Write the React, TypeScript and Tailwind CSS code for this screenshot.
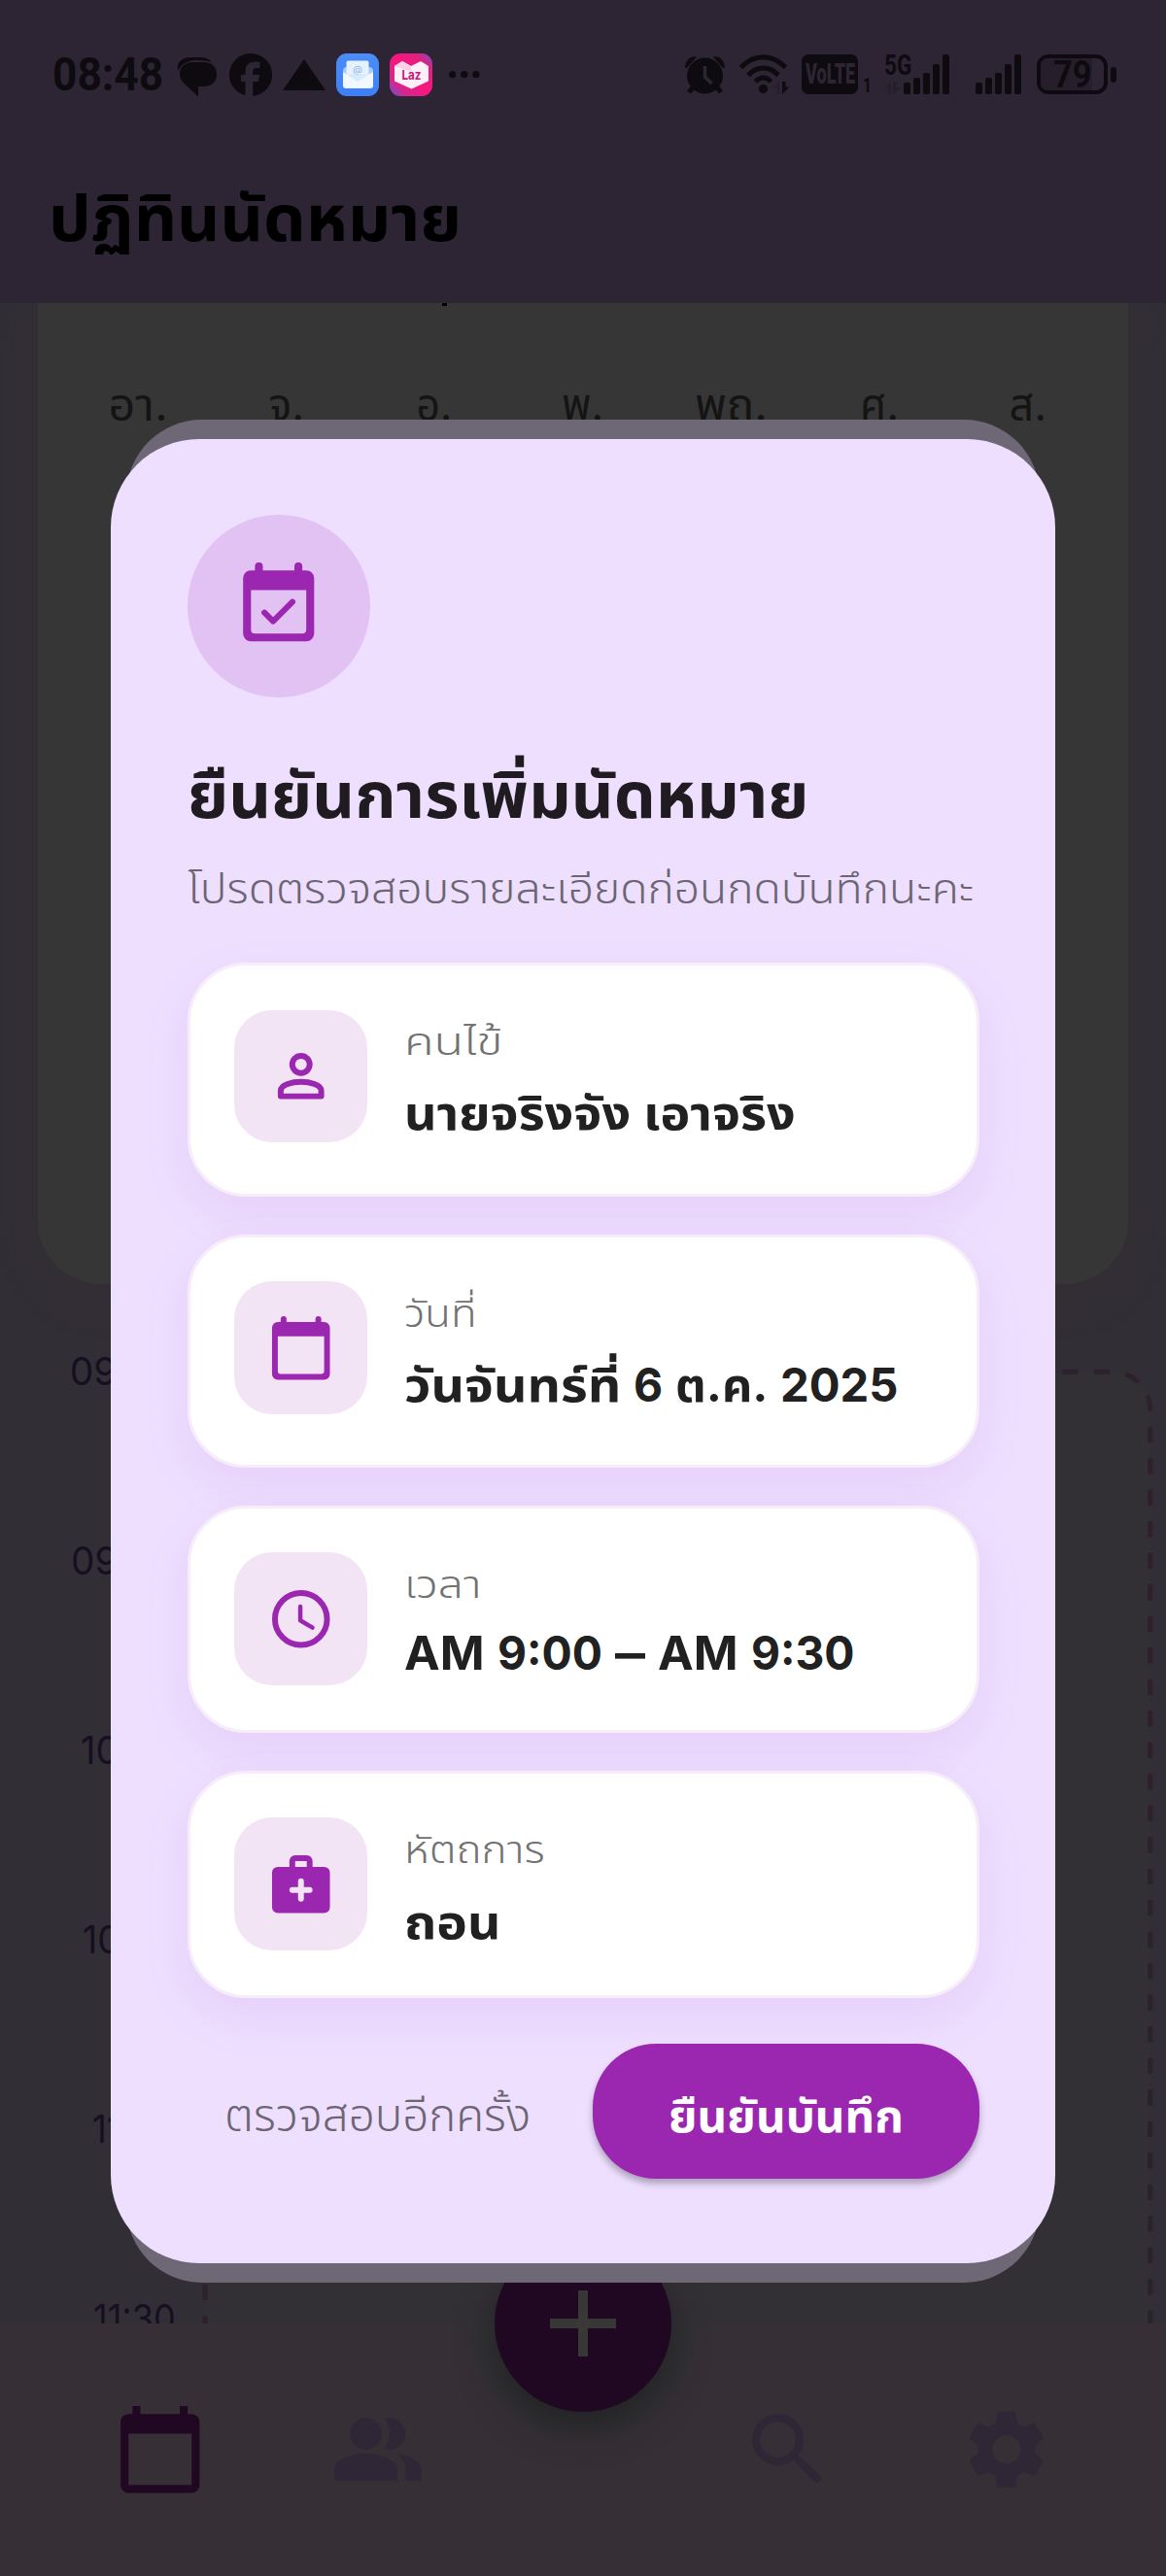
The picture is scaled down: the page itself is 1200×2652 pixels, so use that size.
import React, { useLayoutEffect, useRef, useState } from "react";
import { MdCalendarToday, MdPeopleAlt, MdSettings } from "react-icons/md";

/* Text whose horizontal scale is adjusted so that it occupies exactly `w` pixels. */
function Fit({ w, origin = "left", children }: { w: number; origin?: "left" | "right" | "center"; children: React.ReactNode }) {
  const ref = useRef<HTMLSpanElement>(null);
  const [s, setS] = useState(1);
  useLayoutEffect(() => {
    if (ref.current) setS(w / ref.current.offsetWidth);
  }, [w]);
  return (
    <span
      ref={ref}
      className="inline-block whitespace-nowrap"
      style={{ transform: `scaleX(${s})`, transformOrigin: origin }}
    >
      {children}
    </span>
  );
}

function Signal() {
  return (
    <svg className="h-[41px] w-[47px]" viewBox="0 0 47 41" fill="#0e0b10">
      <rect x="0" y="29" width="7" height="12" rx="2" />
      <rect x="10" y="24" width="7" height="17" rx="2" />
      <rect x="20" y="19" width="7" height="22" rx="2" />
      <rect x="30" y="10" width="7" height="31" rx="2" />
      <rect x="40" y="0" width="7" height="41" rx="2" />
    </svg>
  );
}

function StatusBar() {
  return (
    <div className="flex h-[154px] items-start pl-[54px] text-[#0e0b10]">
      <div className="mt-[52px] h-[50px] w-[113px] font-['Roboto'] text-[49px] leading-[50px] font-bold">
        <Fit w={114}>08:48</Fit>
      </div>
      <svg className="mt-[55px] ml-[15px] h-[44px] w-[41px]" viewBox="0 0 41 44" fill="#0e0b10">
        <path d="M1.500 18C-2 9 7 4 14 4H24c5 0 9 1.500 12 5-8-2-17-3-24-.5C6 10.500 3 14 1.500 18z" />
        <path d="M3 21C3 14 8 9 16 9h12c8 0 13 5 13 12.500S36 34 28 34h-6v10.500L7.500 31C4.500 28 3 25 3 21z" />
      </svg>
      <svg className="mt-[55px] ml-[13px] h-[44px] w-[44px]" viewBox="0 0 44 44" fill="#0e0b10">
        <path d="M22 0A22 22 0 0 0 16.500 43.300V29H12v-7h4.500v-3c0-7 3.300-10.500 10.300-10.500 1.800 0 3.700.2 4.700.5v6h-3c-3.300 0-4.300 1.300-4.300 4.300V22h7l-1.200 7h-5.800v14.900A22 22 0 0 0 22 0z" />
      </svg>
      <svg className="mt-[61px] ml-[11px] h-[32px] w-[44px]" viewBox="0 0 44 32" fill="#0e0b10">
        <path d="M22 0L44 32H0z" />
      </svg>
      <svg className="mt-[55px] ml-[11px] h-[44px] w-[44px]" viewBox="0 0 44 44">
        <defs>
          <linearGradient id="mailBg" x1="0" y1="0" x2="0" y2="1">
            <stop offset="0" stopColor="#4c8df6" />
            <stop offset="1" stopColor="#3a80fa" />
          </linearGradient>
        </defs>
        <rect width="44" height="44" rx="11" fill="url(#mailBg)" />
        <path d="M7 18q0-4 4-4h22q5 0 5 4v12H7z" fill="#a9cbfa" />
        <rect x="10.500" y="7.500" width="23" height="24" rx="2" fill="#e6f1fe" />
        <text x="22" y="20" fontSize="10" textAnchor="middle" fill="#8db4ec" fontFamily="Inter, sans-serif">@</text>
        <path d="M7 19l15 10 16-10v14q0 3-3 3H10q-3 0-3-3z" fill="#f1f8ff" />
        <path d="M10.500 21.500L22 29l11.500-7.500z" fill="#d9eafe" />
      </svg>
      <svg className="mt-[55px] ml-[11px] h-[44px] w-[44px]" viewBox="0 0 44 44">
        <defs>
          <linearGradient id="lazBg" x1="1" y1="0" x2="0" y2="1">
            <stop offset="0" stopColor="#6a55c8" />
            <stop offset="0.200" stopColor="#e01f82" />
            <stop offset="0.500" stopColor="#f8167e" />
            <stop offset="0.800" stopColor="#d22790" />
            <stop offset="1" stopColor="#5a5cd6" />
          </linearGradient>
        </defs>
        <rect width="44" height="44" rx="11" fill="url(#lazBg)" />
        <path d="M5 13l8-5 9 5 10-5 8 5v15.500L22.500 36.500 5 28.500z" fill="#fdf0f7" />
        <path d="M5 13l8-5 9 5 .5 6z" fill="#fbd3e5" />
        <text x="22.500" y="27" fontSize="13.500" fontWeight="700" textAnchor="middle" fill="#c0187c" fontFamily="Inter, sans-serif" textLength="20" lengthAdjust="spacingAndGlyphs">Laz</text>
      </svg>
      <svg className="mt-[73px] ml-[17px] h-[8px] w-[32px]" viewBox="0 0 32 8" fill="#0e0b10">
        <circle cx="3.700" cy="3.700" r="3.600" />
        <circle cx="15.800" cy="3.700" r="3.600" />
        <circle cx="27.900" cy="3.700" r="3.600" />
      </svg>

      <svg className="mt-[57px] ml-[211px] h-[40px] w-[41px]" viewBox="0 0 41 40">
        <path d="M0 13C0 5 6 0 12 1.500L2 13zM41 13C41 5 35 0 29 1.500L39 13z" fill="#0e0b10" />
        <path d="M8 33l-4 5M33 33l4 5" stroke="#0e0b10" strokeWidth="5" />
        <circle cx="20.500" cy="21" r="18.500" fill="#0e0b10" />
        <path d="M20.500 11v11l7 7" stroke="#2d2533" strokeWidth="3.500" fill="none" />
      </svg>
      <svg className="mt-[56px] ml-[15px] h-[41px] w-[52px]" viewBox="0 0 52 41">
        <g fill="none" stroke="#0e0b10" strokeWidth="5">
          <path d="M1.500 13.500C15-1 34-1 47.500 13.500" />
          <path d="M9 21.500C18 11.500 31 11.500 40 21.500" />
          <path d="M16.500 28C21.500 22.500 27.500 22.500 32.500 28" />
        </g>
        <circle cx="24.500" cy="35.500" r="4.600" fill="#0e0b10" />
        <path d="M34.500 35l7-7.500V41h-3v-6z" fill="#261e2b" />
        <path d="M44 28v13l7.500-7.500h-4V28z" fill="#0e0b10" />
      </svg>
      <div className="mt-[56px] ml-[12px] h-[41px] w-[58px] rounded-[7px] bg-[#0e0b10] pl-[3.500px] font-['Roboto'] text-[29px] leading-[41px] font-black text-[#2d2533]">
        <Fit w={51}>VoLTE</Fit>
      </div>
      <div className="mt-[77px] ml-[5px] h-[22px] w-[10px] font-['Roboto'] text-[21px] leading-[22px] font-bold">
        <Fit w={9}>1</Fit>
      </div>
      <div className="mt-[53px] ml-[12px] h-[46px] w-[20px] font-['Roboto'] text-[29px] leading-[28px] font-bold">
        <div className="h-[28px]"><Fit w={28}>5G</Fit></div>
        <svg className="mt-[3px] h-[13px] w-[17px]" viewBox="0 0 17 13" fill="#261e2b">
          <path d="M0 7l7-7v13H4V7zM9 0v13l8-7h-4V0z" />
        </svg>
      </div>
      <div className="mt-[56px]"><Signal /></div>
      <div className="mt-[56px] ml-[27px]"><Signal /></div>
      <div className="mt-[56px] ml-[16px] h-[41px] w-[73px] rounded-[12px] border-4 border-[#0e0b10] pr-[12px] font-['Roboto'] text-[38px] leading-[34px] font-bold">
        <div className="h-full w-full rounded-l-[7px] bg-[#261e2b] pl-[13px]">
          <Fit w={40}>79</Fit>
        </div>
      </div>
      <div className="mt-[69px] ml-[3px] h-[16px] w-[6px] rounded-[3px] bg-[#0e0b10]" />
    </div>
  );
}

const days: [string, number][] = [["อา.", 61], ["จ.", 37], ["อ.", 37], ["พ.", 43], ["พถ.", 75], ["ศ.", 40], ["ส.", 39]];
const times: [string, number][] = [["09:00", 109], ["09:30", 108], ["10:00", 98], ["10:30", 96], ["11:00", 86], ["11:30", 85]];

function Backdrop() {
  return (
    <div className="relative h-[2080px] overflow-hidden bg-[#322e35]">
      <div className="mx-[39px] h-[1010px] rounded-b-[65px] bg-[#363636] shadow-[0_13px_40px_rgba(52,51,53,0.4)]">
        <div className="ml-[416px] h-[3px] w-[5px] bg-black" />
        <div className="grid grid-cols-7 px-[26.500px] pt-[66px] text-[46px] leading-[70px] text-[#141414]">
          {days.map(([d, w]) => (
            <div key={d} className="text-center">
              <Fit w={w} origin="center">{d}</Fit>
            </div>
          ))}
        </div>
      </div>
      <div className="mt-[60px] ml-[60px] w-[121px] text-right text-[39px] leading-[60px] text-[#160f22]">
        {times.map(([t, w]) => (
          <div key={t} className="h-[195px]">
            <Fit w={w} origin="right">{t}</Fit>
          </div>
        ))}
      </div>
      {/* dashed outline of the day's schedule */}
      <svg className="absolute top-[1090px] left-[200px] h-[990px] w-[1000px]" viewBox="0 0 1000 990">
        <path d="M11 990V49.300a39 39 0 0 1 39-39h894.700a39 39 0 0 1 39 39V990z" fill="#323034" />
        <path d="M893.400 10.300H944.700a39 39 0 0 1 39 39V990" fill="none" stroke="#2d212f" strokeWidth="5" strokeDasharray="16.250 16.250" />
        <path d="M11 950V990" fill="none" stroke="#2d212f" strokeWidth="5" strokeDasharray="16.250 16.250" />
      </svg>
    </div>
  );
}

function NavBar() {
  return (
    <div className="relative h-[260px]">
      <svg className="absolute inset-0" width="1200" height="260" viewBox="0 0 1200 260">
        <rect width="1200" height="260" fill="#323134" />
        <path d="M0 0H444C470 0 484 8 485.700 25A117 117 0 0 0 714.300 25C716 8 730 0 756 0H1200V260H0z" fill="#363036" />
      </svg>
      <div className="absolute top-[-91px] left-[509px] flex h-[182px] w-[182px] items-center justify-center rounded-full bg-[#200722] shadow-[0_16px_36px_rgba(28,27,30,0.7)]">
        <svg className="h-[68px] w-[68px]" viewBox="0 0 68 68">
          <path d="M34 0V68M0 34H68" stroke="#383836" strokeWidth="10" />
        </svg>
      </div>
      <div className="relative flex pt-[81px] pl-[115.500px] text-[#2f2736]">
        <MdCalendarToday className="h-[97.500px] w-[97.500px] text-[#200722]" />
        <MdPeopleAlt className="ml-[127px] h-[97.500px] w-[97.500px]" />
        <svg className="ml-[324px] h-[97.500px] w-[97.500px]" viewBox="0 0 24 24" fill="none" stroke="currentColor" strokeWidth="2">
          <circle cx="9.500" cy="9.500" r="5.500" />
          <path d="M13.500 13.500l1.500 1.500" strokeWidth="1.500" />
          <path d="M15 15l4.400 4.400" strokeWidth="2.100" strokeLinecap="round" />
        </svg>
        <MdSettings className="ml-[128px] h-[97.500px] w-[97.500px]" />
      </div>
    </div>
  );
}

const icon = "h-[71.500px] w-[71.500px] text-[#9b27b0]";

const PersonIcon = () => (
  <svg className={icon} viewBox="0 0 24 24" fill="none" stroke="currentColor" strokeWidth="2">
    <circle cx="12" cy="8" r="3" />
    <path d="M5 17c0-2 4-3 7-3s7 1 7 3v2H5z" strokeLinejoin="round" />
  </svg>
);

const DayIcon = () => (
  <svg className={icon} viewBox="0 0 24 24" fill="currentColor" fillRule="evenodd">
    <path d="M20 3h-1V2a1 1 0 0 0-2 0v1H7V2a1 1 0 0 0-2 0v1H4a2 2 0 0 0-2 2v16a2 2 0 0 0 2 2h16a2 2 0 0 0 2-2V5a2 2 0 0 0-2-2zM4 8h16v12a1 1 0 0 1-1 1H5a1 1 0 0 1-1-1z" />
  </svg>
);

const ClockIcon = () => (
  <svg className={icon} viewBox="0 0 24 24" fill="none" stroke="currentColor" strokeWidth="2">
    <circle cx="12" cy="12" r="9" />
    <path d="M11.770 7.700V12.500l4.200 2.500" strokeWidth="1.500" strokeLinecap="round" strokeLinejoin="round" />
  </svg>
);

const MedicalIcon = () => (
  <svg className={icon} viewBox="0 0 24 24" fill="currentColor" fillRule="evenodd">
    <path d="M20 6h-4V4a2 2 0 0 0-2-2h-4a2 2 0 0 0-2 2v2H4a2 2 0 0 0-2 2v12a2 2 0 0 0 2 2h16a2 2 0 0 0 2-2V8a2 2 0 0 0-2-2zM10 4h4v2h-4zM13 15v2a1 1 0 0 1-2 0v-2H9a1 1 0 0 1 0-2h2v-2a1 1 0 0 1 2 0v2h2a1 1 0 0 1 0 2z" />
  </svg>
);

/* Each word of a value: its text, and its width on screen. */
type Word = [string, number];
type RowProps = { icon: React.ReactNode; label: string; lw: number; value: Word[]; className: string; valueClass?: string };

function Row({ icon, label, lw, value, className, valueClass = "mt-[4px]" }: RowProps) {
  return (
    <div className={`flex items-start rounded-[60px] border-[3.250px] border-[#f6edf9] bg-white p-[45.500px] shadow-[0_19px_52px_rgba(156,39,176,0.08)] ${className}`}>
      <div className="flex h-[136.500px] w-[136.500px] shrink-0 items-center justify-center rounded-[39px] bg-[#f2e4f5]">{icon}</div>
      <div className="ml-[38.500px] pt-[2.500px]">
        <div className="h-[60px] text-[39px] leading-[60px] font-[350] text-[#727272]">
          <Fit w={lw}>{label}</Fit>
        </div>
        <div className={`flex h-[80px] gap-[13px] text-[48px] leading-[80px] font-bold text-[#212121] ${valueClass}`}>
          {value.map(([word, w], i) => (
            <div key={i} style={{ width: w }}>
              <Fit w={w}>{word}</Fit>
            </div>
          ))}
        </div>
      </div>
    </div>
  );
}

function ConfirmDialog() {
  return (
    <div className="absolute top-[432px] left-[114px] w-[972px]">
      <div className="absolute inset-x-[16px] top-0 h-[1918px] rounded-[78px] bg-[#6e6775]" />
      <div className="relative mt-[19.500px] h-[1878.500px] rounded-[91px] bg-[#eedfff] px-[78.500px] pt-[78px]">
        <div className="flex h-[188.500px] w-[188.500px] items-center justify-center rounded-full bg-[#e1c2f2]">
          <svg className="h-[97.500px] w-[97.500px] text-[#9b27b0]" viewBox="0 0 24 24" fill="currentColor">
            <path fillRule="evenodd" d="M19 3h-1V2a1 1 0 0 0-2 0v1H8V2a1 1 0 0 0-2 0v1H5a2 2 0 0 0-2 2v14a2 2 0 0 0 2 2h14a2 2 0 0 0 2-2V5a2 2 0 0 0-2-2zM5 8h14v10a1 1 0 0 1-1 1H6a1 1 0 0 1-1-1z" />
            <path d="M8.400 13.700l2.200 2.200 4.900-4.900" fill="none" stroke="currentColor" strokeWidth="1.500" strokeLinecap="round" strokeLinejoin="round" />
          </svg>
        </div>
        <div className="mt-[50.500px] h-[98px] text-[66px] leading-[98px] font-bold text-[#1f1b20]">
          <Fit w={640}>ยืนยันการเพิ่มนัดหมาย</Fit>
        </div>
        <div className="mt-[18.500px] h-[60px] text-[42px] leading-[60px] font-[350] text-[#6c6573]">
          <Fit w={809}>โปรดตรวจสอบรายละเอียดก่อนกดบันทึกนะคะ</Fit>
        </div>
        <div className="mt-[46px] flex flex-col gap-[39px]">
          <Row icon={<PersonIcon />} label="คนไข้" lw={102} value={[["นายจริงจัง", 233], ["เอาจริง", 157]]} className="h-[240.700px]" />
          <Row icon={<DayIcon />} label="วันที่" lw={75} value={[["วันจันทร์ที่", 223], ["6", 30], ["ต.ค.", 95], ["2025", 122]]} className="h-[240px]" />
          <Row icon={<ClockIcon />} label="เวลา" lw={79} value={[["AM", 83], ["9:00", 108], ["–", 31], ["AM", 83], ["9:30", 107]]} className="h-[234.250px]" valueClass="mt-px" />
          <Row icon={<MedicalIcon />} label="หัตถการ" lw={145} value={[["ถอน", 99]]} className="h-[234.250px]" valueClass="mt-[5px]" />
        </div>
        <div className="mt-[47px] flex h-[139px] items-center pl-[38px] text-[46px] leading-[80px]">
          <div className="w-[379.500px] pt-[7px] font-[350] text-[#6c6573]">
            <Fit w={315}>ตรวจสอบอีกครั้ง</Fit>
          </div>
          <div className="h-[139px] w-[397.500px] shrink-0 rounded-[65px] bg-[#9b27b0] pt-[34px] pl-[78px] font-bold text-white shadow-[0_5px_7px_rgba(0,0,0,0.28)]">
            <Fit w={242}>ยืนยันบันทึก</Fit>
          </div>
        </div>
      </div>
    </div>
  );
}

export default function App() {
  return (
    <div className="relative h-[2652px] w-[1200px] overflow-hidden bg-[#2d2533] font-['Inter','Noto_Sans_Thai','Noto_Sans',sans-serif]">
      <header className="h-[312px]">
        <StatusBar />
        <h1 className="mt-[21px] ml-[50px] h-[98px] text-[66px] leading-[98px] font-bold text-black">
          <Fit w={425}>ปฏิทินนัดหมาย</Fit>
        </h1>
      </header>
      <Backdrop />
      <NavBar />
      <ConfirmDialog />
    </div>
  );
}
